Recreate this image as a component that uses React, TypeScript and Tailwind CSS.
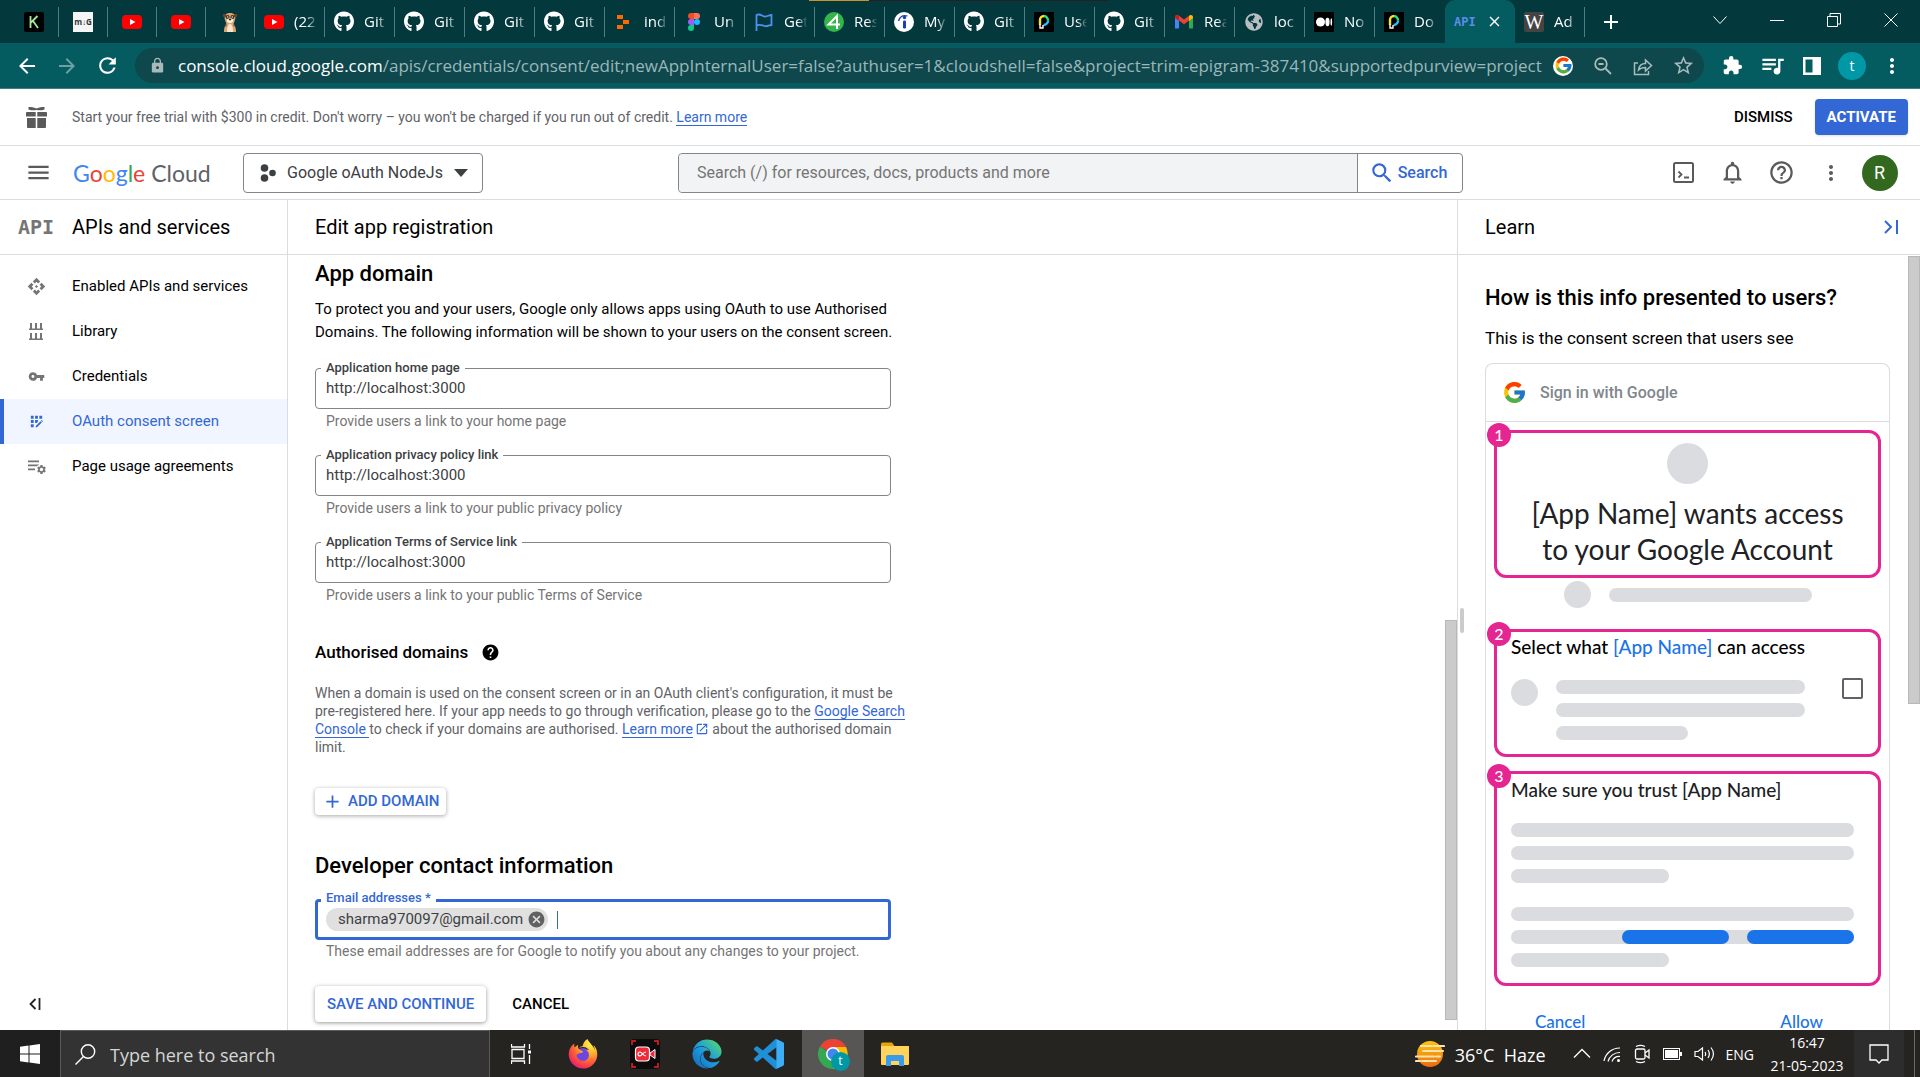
import React from "react";
import {
  MdAdd,
  MdApi,
  MdAppRegistration,
  MdArrowBack,
  MdArrowForward,
  MdCancel,
  MdClose,
  MdExtension,
  MdHelp,
  MdHelpOutline,
  MdLock,
  MdMenu,
  MdMoreVert,
  MdNotificationsNone,
  MdOpenInNew,
  MdQueueMusic,
  MdRefresh,
  MdSearch,
  MdSettings,
  MdStarBorder,
  MdVpnKey,
} from "react-icons/md";
import { FcGoogle } from "react-icons/fc";
import { FaEdge, FaFirefoxBrowser, FaGithub, FaGlobeAmericas } from "react-icons/fa";

/* ---------- favicons ---------- */

const YouTube = () => (
  <svg width="20" height="20" viewBox="0 0 20 20">
    <rect y="3" width="20" height="14" rx="4" fill="#ff0000" />
    <path d="M8 7l5.5 3L8 13z" fill="#fff" />
  </svg>
);

const KIcon = () => (
  <svg width="20" height="20" viewBox="0 0 20 20">
    <rect width="20" height="20" rx="2" fill="#000" />
    <path d="M6.5 4v12M13.5 4L7 10.5M9 9l5 7" stroke="#a6e89a" strokeWidth="1.8" fill="none" />
  </svg>
);

const MdIcon = () => (
  <span className="flex size-5 items-center justify-center bg-[#f5f5f5] text-[8px] font-bold text-[#333]">m↓G</span>
);

const Meerkat = () => (
  <svg width="20" height="20" viewBox="0 0 20 20">
    <path d="M4 20c0-5 1.500-7 2.500-8L5 8c-1.500-5 1-7 5-7s6.500 2 5 7l-1.500 4c1 1 2.500 3 2.500 8z" fill="#d9a775" />
    <path d="M7 20c0-5 1-8 3-8s3 3 3 8z" fill="#fbe6cb" />
    <path d="M6 12l-1 3 2-1zM14 12l1 3-2-1z" fill="#8a5a34" />
    <circle cx="4.500" cy="3.500" r="1.800" fill="#6b4526" />
    <circle cx="15.500" cy="3.500" r="1.800" fill="#6b4526" />
    <circle cx="7.600" cy="5" r="2" fill="#4a2f1c" />
    <circle cx="12.400" cy="5" r="2" fill="#4a2f1c" />
    <circle cx="7.700" cy="4.900" r=".7" fill="#fff" />
    <circle cx="12.300" cy="4.900" r=".7" fill="#fff" />
    <ellipse cx="10" cy="8.600" rx="3" ry="2.300" fill="#fff4e4" />
    <ellipse cx="10" cy="7.400" rx="1.300" ry=".9" fill="#222" />
  </svg>
);

const GitHub = () => <FaGithub size={21} color="#fff" />;

const Pixels = () => (
  <svg width="20" height="20" viewBox="0 0 20 20" fill="#ff6a00">
    <path d="M3 3h6v4H3zM9 8h6v4H9zM3 13h6v4H3z" />
  </svg>
);

const Figma = () => (
  <svg width="20" height="20" viewBox="0 0 20 20">
    <path d="M7 1h3v6H7a3 3 0 010-6z" fill="#f24e1e" />
    <path d="M10 1h3a3 3 0 010 6h-3z" fill="#ff7262" />
    <path d="M7 7h3v6H7a3 3 0 010-6z" fill="#a259ff" />
    <circle cx="13" cy="10" r="3" fill="#1abcfe" />
    <path d="M7 13h3v3a3 3 0 11-3-3z" fill="#0acf83" />
  </svg>
);

const Flag = () => (
  <svg width="20" height="20" viewBox="0 0 20 20" fill="none" stroke="#4f8ff0" strokeWidth="1.8">
    <path d="M2.500 19V3c4-2 6 2 9 1.500 2-.2 4-1.500 6-1.500v10c-3 0-4 2-7 1s-5-2-8-.5" />
  </svg>
);

const Four = () => (
  <svg width="20" height="20" viewBox="0 0 20 20">
    <circle cx="10" cy="10" r="10" fill="#35b44a" />
    <path d="M13 17V4L4.500 12.500H16" stroke="#fff" strokeWidth="2" fill="none" />
  </svg>
);

const Indeed = () => (
  <svg width="20" height="20" viewBox="0 0 20 20">
    <circle cx="10" cy="10" r="10" fill="#fff" />
    <circle cx="10.500" cy="5.500" r="1.700" fill="#1b3fb0" />
    <rect x="9" y="8.500" width="3" height="8" rx="1.200" fill="#1b3fb0" />
    <path d="M4.500 9c1-4 4-6.500 9-5" stroke="#1b3fb0" strokeWidth="1.300" fill="none" />
  </svg>
);

const PIcon = () => (
  <svg width="20" height="20" viewBox="0 0 20 20" fill="none" strokeWidth="2.400">
    <rect width="20" height="20" fill="#000" />
    <path d="M6 13V8a4 4 0 014-4" stroke="#f5e625" />
    <path d="M10 4a4.500 4.500 0 014 4.500" stroke="#35e07a" />
    <path d="M14 8.500A4.500 4.500 0 019.500 13" stroke="#22c3ff" />
    <path d="M6 12.500V16h3v-3" stroke="#fff" strokeWidth="1.400" />
  </svg>
);

const Gmail = () => (
  <svg width="20" height="20" viewBox="0 0 20 20">
    <path d="M1 5v11.500h4V8z" fill="#4285f4" />
    <path d="M19 5v11.500h-4V8z" fill="#34a853" />
    <path d="M1 5.500C1 3 3.500 2.500 5 3.700l5 3.800 5-3.800v4.800l-5 3.800-5-3.800L1 6z" fill="#ea4335" />
    <path d="M15 3.700c1.500-1.200 4-.7 4 1.800v.5l-4 3z" fill="#fbbc04" />
    <path d="M1 5.500C1 3 3.500 2.500 5 3.700v5L1 6z" fill="#c5221f" />
  </svg>
);

const Globe = () => <FaGlobeAmericas size={18} color="#b9bdc0" />;

const Medium = () => (
  <svg width="20" height="20" viewBox="0 0 20 20" fill="#fff">
    <rect width="20" height="20" rx="1" fill="#000" />
    <circle cx="6.500" cy="10" r="4.500" />
    <ellipse cx="13.500" cy="10" rx="2.100" ry="4.200" />
    <ellipse cx="17.300" cy="10" rx=".8" ry="3.800" />
  </svg>
);

const WIcon = () => (
  <span className="flex size-5 items-center justify-center rounded-xs bg-[#444] font-['Liberation_Serif',serif] text-xl leading-5 text-white">
    W
  </span>
);

/* ---------- browser chrome ---------- */

const pinned = [KIcon, MdIcon, YouTube, YouTube, Meerkat];

const openTabs: { icon: React.ComponentType; title: string }[] = [
  { icon: YouTube, title: "(22" },
  { icon: GitHub, title: "Git" },
  { icon: GitHub, title: "Git" },
  { icon: GitHub, title: "Git" },
  { icon: GitHub, title: "Git" },
  { icon: Pixels, title: "ind" },
  { icon: Figma, title: "Un" },
  { icon: Flag, title: "Get" },
  { icon: Four, title: "Res" },
  { icon: Indeed, title: "My" },
  { icon: GitHub, title: "Git" },
  { icon: PIcon, title: "Use" },
  { icon: GitHub, title: "Git" },
  { icon: Gmail, title: "Rea" },
  { icon: Globe, title: "loc" },
  { icon: Medium, title: "No" },
  { icon: PIcon, title: "Do" },
];

function Tab({ icon: Icon, title, last }: { icon: React.ComponentType; title: string; last?: boolean }) {
  return (
    <button className="flex h-full w-[70px] shrink-0 items-center">
      <span className="ml-[9px] flex w-5 shrink-0 justify-center">
        <Icon />
      </span>
      <span className="ml-[10px] w-[26px] whitespace-nowrap text-left text-[15px] text-white [mask-image:linear-gradient(to_right,black_50%,transparent_90%)]">
        {title}
      </span>
      <span className={last ? "hidden" : "ml-auto h-[30px] w-px bg-[#4f7d80]"} />
    </button>
  );
}

function TabStrip() {
  return (
    <div className="relative flex h-[43px] shrink-0 items-center bg-[#03383d] pl-[10px] font-['Open_Sans',sans-serif]">
      <div className="absolute left-[809px] top-0 flex h-px w-[301px] bg-[#222]">
        <span className="w-[60px] bg-[#c8922d]" />
      </div>
      {pinned.map((Icon, i) => (
        <button key={i} aria-label="Pinned tab" className="flex h-full w-[49px] shrink-0 items-center">
          <span className="flex flex-1 justify-center">
            <Icon />
          </span>
          <span className="h-[30px] w-px bg-[#4f7d80]" />
        </button>
      ))}
      {openTabs.map((t, i) => (
        <Tab key={i} icon={t.icon} title={t.title} last={i === openTabs.length - 1} />
      ))}
      <div className="flex h-full w-[70px] shrink-0 items-center justify-between rounded-t-[10px] bg-[#045b60] pl-[9px] pr-3">
        <span className="font-['DejaVu_Sans_Mono',monospace] text-xs font-bold text-[#5c8ce8]">API</span>
        <button aria-label="Close tab">
          <MdClose size={17} color="#fff" />
        </button>
      </div>
      <Tab icon={WIcon} title="Ad" />
      <button aria-label="New tab" className="ml-[14px]">
        <MdAdd size={24} color="#fff" />
      </button>
      <div className="ml-auto flex h-full items-center pb-1 pr-px">
        <button aria-label="Search tabs" className="flex w-[57px] justify-center">
          <svg width="14" height="14" viewBox="0 0 14 14" fill="none" stroke="#fff">
            <path d="M.5 3.500L7 10.500l6.500-7" />
          </svg>
        </button>
        <button aria-label="Minimise" className="flex w-[57px] justify-center">
          <svg width="14" height="14" viewBox="0 0 14 14" fill="none" stroke="#fff">
            <path d="M0 7.500h14" />
          </svg>
        </button>
        <button aria-label="Restore" className="flex w-[57px] justify-center">
          <svg width="14" height="14" viewBox="0 0 14 14" fill="none" stroke="#fff">
            <path d="M.5 3.500h10v10H.5zM3 3V.5h10.500V11H11" />
          </svg>
        </button>
        <button aria-label="Close window" className="flex w-[57px] justify-center">
          <svg width="14" height="14" viewBox="0 0 14 14" fill="none" stroke="#fff">
            <path d="M.5.5l13 13M13.500.5l-13 13" />
          </svg>
        </button>
      </div>
    </div>
  );
}

function AddressBar() {
  return (
    <div className="flex h-[46px] shrink-0 items-center border-b border-[#3d8084] bg-[#045b60] font-['Open_Sans',sans-serif] text-white">
      <div className="flex w-[135px] shrink-0 items-center pl-[7px]">
        <button aria-label="Back" className="flex w-10 justify-center">
          <MdArrowBack size={24} />
        </button>
        <button aria-label="Forward" className="flex w-10 justify-center text-[#6da0a3]">
          <MdArrowForward size={24} />
        </button>
        <button aria-label="Reload" className="flex w-10 justify-center">
          <MdRefresh size={25} />
        </button>
      </div>
      <div className="flex h-[35px] min-w-0 flex-1 items-center rounded-full bg-[#0e484d] pl-[14px]">
        <MdLock size={17} color="#a9b9ba" className="shrink-0" />
        <div className="ml-3 min-w-0 flex-1 overflow-hidden whitespace-nowrap text-[17px] text-[#9bb7b9]">
          <span className="text-white">console.cloud.google.com</span>
          /apis/credentials/consent/edit;newAppInternalUser=false?authuser=1&amp;cloudshell=false&amp;project=trim-epigram-387410&amp;supportedpurview=project
        </div>
        <div className="flex shrink-0 items-center pr-px text-[#a9bbbc]">
          <button aria-label="Search with Google" className="flex w-10 justify-center">
            <span className="flex size-5 items-center justify-center rounded-full bg-white">
              <FcGoogle size={19} />
            </span>
          </button>
          <button aria-label="Zoom" className="flex w-10 justify-center">
            <svg width="18" height="18" viewBox="0 0 18 18" fill="none" stroke="currentColor" strokeWidth="1.800">
              <circle cx="7" cy="7" r="5.800" />
              <path d="M4.500 7h5M11.500 11.500l5.500 5.500" />
            </svg>
          </button>
          <button aria-label="Share" className="flex w-10 justify-center">
            <svg width="20" height="20" viewBox="0 0 20 20" fill="none" stroke="currentColor" strokeWidth="1.500">
              <path d="M5 7H1.500v11.500h14V15M5.500 14c.5-4 3-6.500 7-6.500V4l6 5.500-6 5.500v-3.500c-3 0-5 .5-7 2.500z" />
            </svg>
          </button>
          <button aria-label="Bookmark" className="flex w-10 justify-center">
            <MdStarBorder size={23} />
          </button>
        </div>
      </div>
      <div className="flex shrink-0 items-center px-2">
        <button aria-label="Extensions" className="flex w-10 justify-center">
          <MdExtension size={21} />
        </button>
        <button aria-label="Media" className="flex w-10 justify-center">
          <MdQueueMusic size={27} />
        </button>
        <button aria-label="Side panel" className="flex w-10 justify-center">
          <svg width="18" height="18" viewBox="0 0 18 18">
            <path d="M0 0h18v18H0zM2.500 2.500v13h7v-13z" fill="#fff" fillRule="evenodd" />
          </svg>
        </button>
        <button aria-label="Profile" className="flex w-10 justify-center">
          <span className="flex size-7 items-center justify-center rounded-full bg-[#0097a7] text-sm">t</span>
        </button>
        <button aria-label="Menu" className="flex w-10 justify-center">
          <MdMoreVert size={24} />
        </button>
      </div>
    </div>
  );
}

/* ---------- console header ---------- */

function TrialBanner() {
  return (
    <div className="flex h-[57px] shrink-0 items-center border-b border-[#dadce0] pr-3">
      <span className="flex w-[72px] justify-center">
        <svg width="21" height="21" viewBox="0 0 21 21" fill="#5a5a5a">
          <path d="M1 5h8.700v4.500H0V6a1 1 0 011-1zM11.300 5H20a1 1 0 011 1v3.500h-9.700zM1 11h8.700v10H2a1 1 0 01-1-1zM11.300 11H20v9a1 1 0 01-1 1h-7.700z" />
          <path d="M2.500 0c3 0 5 0 8 1.600C13.500 0 15.500 0 18.500 0v2.500c-3 1-5 1-8 .5-3 .5-5 .5-8-.5z" />
        </svg>
      </span>
      <p className="text-sm text-[#5f6368]">
        Start your free trial with $300 in credit. Don't worry – you won't be charged if you run out of credit.{" "}
        <a href="#" className="border-b border-[#3367d6] text-[#3367d6]">
          Learn more
        </a>
      </p>
      <div className="ml-auto flex items-center gap-[10px] text-[15px] font-medium">
        <button className="px-3">DISMISS</button>
        <button className="h-9 rounded bg-[#3367d6] px-3 font-bold text-white shadow">ACTIVATE</button>
      </div>
    </div>
  );
}

function ConsoleHeader() {
  return (
    <header className="flex h-[54px] shrink-0 items-center border-b border-[#dadce0]">
      <div className="flex w-[678px] shrink-0 items-center pl-[25px]">
        <button aria-label="Navigation menu">
          <MdMenu size={27} color="#5a5a5a" />
        </button>
        <a href="#" className="ml-[21px] w-[149px] whitespace-nowrap font-['Lato',sans-serif] text-[23px] leading-7 text-[#5f6368]">
          <span className="text-[#4285f4]">G</span>
          <span className="text-[#ea4335]">o</span>
          <span className="text-[#fbbc04]">o</span>
          <span className="text-[#4285f4]">g</span>
          <span className="text-[#34a853]">l</span>
          <span className="text-[#ea4335]">e</span> Cloud
        </a>
        <button className="ml-[21px] flex h-10 w-[240px] items-center rounded border border-[#80868b] pl-4 text-base text-[#3c4043]">
          <svg width="16" height="18" viewBox="0 0 16 18" fill="#3c4043">
            <circle cx="4.500" cy="4" r="3.800" />
            <circle cx="4.500" cy="14" r="3.800" />
            <circle cx="12.500" cy="9" r="3.300" />
          </svg>
          <span className="ml-[11px] whitespace-nowrap">Google oAuth NodeJs</span>
          <svg width="14" height="8" viewBox="0 0 14 8" fill="#3c4043" className="ml-[11px]">
            <path d="M0 0h14L7 8z" />
          </svg>
        </button>
      </div>
      <form className="flex h-10 max-w-[785px] flex-1 rounded border border-[#80868b]">
        <input
          aria-label="Search"
          placeholder="Search (/) for resources, docs, products and more"
          className="min-w-0 flex-1 rounded-l bg-[#f1f3f4] px-[18px] text-base outline-none placeholder:text-[#757575]"
        />
        <button
          type="button"
          className="flex w-[105px] items-center justify-center gap-[3px] border-l border-[#80868b] pr-1 text-base font-medium text-[#3367d6]"
        >
          <MdSearch size={26} />
          Search
        </button>
      </form>
      <div className="ml-auto flex items-center pr-4 text-[#5a5a5a]">
        <button aria-label="Cloud Shell" className="flex w-[49px] justify-center">
          <svg width="21" height="21" viewBox="0 0 21 21" fill="none" stroke="currentColor" strokeWidth="2">
            <rect x="1" y="1" width="19" height="19" rx="1.500" />
            <path d="M5.500 9.500l3 3-3 3M11 15.500h5" strokeWidth="1.800" />
          </svg>
        </button>
        <button aria-label="Notifications" className="flex w-[49px] justify-center">
          <MdNotificationsNone size={27} />
        </button>
        <button aria-label="Help" className="flex w-[49px] justify-center">
          <MdHelpOutline size={27} />
        </button>
        <button aria-label="More options" className="flex w-[49px] justify-center">
          <MdMoreVert size={24} />
        </button>
        <button aria-label="Account" className="flex w-[49px] justify-center">
          <span className="flex size-9 items-center justify-center rounded-full bg-[#33691e] text-lg text-white">R</span>
        </button>
      </div>
    </header>
  );
}

/* ---------- sidebar ---------- */

const LibraryIcon = () => (
  <svg width="14" height="17" viewBox="0 0 14 17" fill="currentColor">
    <path d="M0 5.500h14V7H0zM1 0h2v6H1zM6 0h2v6H6zM11 0h2v6h-2zM0 15.500h14V17H0zM1 10h2v6H1zM6 10h2v6H6zM11 10h2v6h-2z" />
  </svg>
);

const UsageIcon = () => (
  <span className="relative block h-4 w-[17px]">
    <svg width="11" height="13" viewBox="0 0 11 13" fill="currentColor">
      <path d="M0 1.500h11v1.700H0zM0 5.500h11v1.700H0zM0 9.500h7v1.700H0z" />
    </svg>
    <span className="absolute -right-0.5 bottom-0 rounded-full bg-white">
      <MdSettings size={11} />
    </span>
  </span>
);

const navItems = [
  { label: "Enabled APIs and services", icon: <MdApi size={19} /> },
  { label: "Library", icon: <LibraryIcon /> },
  { label: "Credentials", icon: <MdVpnKey size={17} /> },
  { label: "OAuth consent screen", icon: <MdAppRegistration size={17} />, active: true },
  { label: "Page usage agreements", icon: <UsageIcon /> },
];

function Sidebar() {
  return (
    <aside className="flex w-[288px] shrink-0 flex-col border-r border-[#dadce0]">
      <div className="flex h-[55px] shrink-0 items-center border-b border-[#dadce0]">
        <span className="w-[72px] text-center font-['DejaVu_Sans_Mono',monospace] text-xl font-bold text-[#757575]">API</span>
        <h2 className="text-xl">APIs and services</h2>
      </div>
      <nav className="pt-[9px]">
        {navItems.map((n) => (
          <a
            key={n.label}
            href="#"
            className={
              n.active
                ? "flex h-[45px] items-center border-l-4 border-[#3367d6] bg-[#f0f5ff] text-[15px] text-[#3367d6]"
                : "flex h-[45px] items-center border-l-4 border-transparent text-[15px]"
            }
          >
            <span className={n.active ? "flex w-[68px] justify-center pr-1" : "flex w-[68px] justify-center pr-1 text-[#757575]"}>
              {n.icon}
            </span>
            {n.label}
          </a>
        ))}
      </nav>
      <button aria-label="Collapse menu" className="mb-5 ml-7 mt-auto w-fit">
        <svg width="14" height="12" viewBox="0 0 14 12" fill="none" stroke="#222" strokeWidth="1.800">
          <path d="M7.500 1L2.500 6l5 5M11.500 0v12" />
        </svg>
      </button>
    </aside>
  );
}

/* ---------- form ---------- */

const fields = [
  { id: "home", label: "Application home page", hint: "Provide users a link to your home page" },
  { id: "privacy", label: "Application privacy policy link", hint: "Provide users a link to your public privacy policy" },
  { id: "terms", label: "Application Terms of Service link", hint: "Provide users a link to your public Terms of Service" },
];

function FormPanel() {
  return (
    <main className="relative flex min-w-0 flex-1 flex-col">
      <div className="flex h-[55px] shrink-0 items-center border-b border-[#dadce0] pl-[27px]">
        <h1 className="text-xl">Edit app registration</h1>
      </div>
      <div className="min-h-0 flex-1 overflow-hidden pl-[27px] pt-[5px]">
        <h2 className="text-[22px] font-medium leading-7">App domain</h2>
        <p className="mt-[10px] max-w-[600px] text-[15px] leading-[23px]">
          To protect you and your users, Google only allows apps using OAuth to use Authorised Domains. The following
          information will be shown to your users on the consent screen.
        </p>
        <div className="mt-6 flex max-w-[576px] flex-col gap-[25px]">
          {fields.map((f) => (
            <div key={f.id} className="relative">
              <label
                htmlFor={f.id}
                className="absolute -top-2 left-[6px] bg-white px-[5px] text-[13px] font-medium leading-4 text-[#3c4043]"
              >
                {f.label}
              </label>
              <input
                id={f.id}
                defaultValue="http://localhost:3000"
                className="block h-[41px] w-full rounded border border-[#80868b] px-[10px] pb-0.5 text-[15px] text-[#3c4043] outline-none"
              />
              <p className="mt-1 pl-[11px] text-sm leading-[17px] text-[#757575]">{f.hint}</p>
            </div>
          ))}
        </div>
        <div className="mt-9 flex items-center gap-[13px]">
          <h3 className="text-[17px] font-medium leading-6">Authorised domains</h3>
          <button aria-label="About authorised domains">
            <MdHelp size={19} />
          </button>
        </div>
        <p className="mt-5 max-w-[594px] text-sm leading-[18px] text-[#5f6368]">
          When a domain is used on the consent screen or in an OAuth client's configuration, it must be pre-registered
          here. If your app needs to go through verification, please go to the{" "}
          <a href="#" className="border-b border-[#3367d6] text-[#3367d6]">
            Google Search Console{" "}
          </a>
          to check if your domains are authorised.{" "}
          <a href="#" className="text-[#3367d6]">
            <span className="border-b border-[#3367d6]">Learn more</span>
            <MdOpenInNew size={14} className="ml-0.5 inline align-[-2px]" />
          </a>{" "}
          about the authorised domain limit.
        </p>
        <button className="mt-8 flex h-[27px] items-center gap-[5px] rounded px-[7px] text-[15px] font-medium text-[#3367d6] shadow-[0_1px_4px_rgba(0,0,0,0.35)]">
          <MdAdd size={21} />
          ADD DOMAIN
        </button>
        <h2 className="mt-[37px] text-[22px] font-medium leading-7">Developer contact information</h2>
        <div className="relative mt-[19px] max-w-[576px]">
          <label
            htmlFor="emails"
            className="absolute -top-2 left-[6px] bg-white px-[5px] text-[13px] font-medium leading-[14px] text-[#3367d6]"
          >
            Email addresses *
          </label>
          <div className="flex h-[41px] items-center rounded border-3 border-[#3367d6] pl-2">
            <span className="flex h-[23px] items-center gap-1 rounded-full bg-[#e0e0e0] pl-3 pr-0.5 text-[15px] text-[#3c4043]">
              sharma970097@gmail.com
              <button aria-label="Remove sharma970097@gmail.com">
                <MdCancel size={19} color="#616161" />
              </button>
            </span>
            <span className="ml-[9px] h-[18px] w-px bg-[#3367d6]" />
            <input id="emails" className="min-w-0 flex-1 outline-none" />
          </div>
          <p className="mt-[3px] pl-[11px] text-sm leading-[17px] text-[#757575]">
            These email addresses are for Google to notify you about any changes to your project.
          </p>
        </div>
        <div className="mt-[26px] flex gap-[14px] text-[15px] font-medium">
          <button className="h-9 rounded px-3 text-[#3367d6] shadow-[0_1px_4px_rgba(0,0,0,0.4)]">
            SAVE AND CONTINUE
          </button>
          <button className="h-9 px-3">CANCEL</button>
        </div>
      </div>
      <div className="absolute bottom-[10px] right-0 h-[400px] w-3 border border-[#b8b8b8] bg-[#cbcbcb]" />
    </main>
  );
}

/* ---------- learn panel ---------- */

const Bar = ({ className = "" }: { className?: string }) => (
  <span className={`block h-[14px] rounded-full bg-[#dadce0] ${className}`} />
);

function Callout({ n, className, children }: { n: number; className: string; children: React.ReactNode }) {
  return (
    <section className={`relative rounded-xl border-3 border-[#e52592] ${className}`}>
      <span className="absolute -left-[10px] -top-[10px] flex size-6 items-center justify-center rounded-full bg-[#e52592] text-base font-medium text-white">
        {n}
      </span>
      {children}
    </section>
  );
}

function LearnPanel() {
  return (
    <aside className="relative flex w-[463px] shrink-0 flex-col border-l border-[#dadce0]">
      <div className="flex h-[55px] shrink-0 items-center justify-between border-b border-[#dadce0] pl-[27px] pr-[22px]">
        <h2 className="text-xl">Learn</h2>
        <button aria-label="Hide panel">
          <svg width="14" height="14" viewBox="0 0 14 14" fill="none" stroke="#3367d6" strokeWidth="2">
            <path d="M1 1l6 6-6 6M13 0v14" />
          </svg>
        </button>
      </div>
      <div className="min-h-0 flex-1 overflow-hidden pl-[27px] pr-[30px] pt-[29px]">
        <h3 className="text-[22px] font-medium leading-7">How is this info presented to users?</h3>
        <p className="mt-[14px] text-[17px] leading-6">This is the consent screen that users see</p>
        <div className="mt-[13px] rounded-t-lg border border-b-0 border-[#dadce0] font-['Lato',sans-serif]">
          <div className="flex h-[58px] items-center gap-[13px] border-b border-[#dadce0] pl-4 font-['Roboto',sans-serif] text-base font-medium text-[#80868b]">
            <FcGoogle size={25} />
            Sign in with Google
          </div>
          <div className="px-2 pt-2">
            <Callout n={1} className="flex h-[148px] flex-col items-center pt-[10px]">
              <span className="size-[41px] rounded-full bg-[#dadce0]" />
              <p className="mt-[11px] whitespace-nowrap text-center text-[28px] leading-9 text-[#202124]">
                [App Name] wants access
                <br />
                to your Google Account
              </p>
            </Callout>
            <div className="mt-[3px] flex items-center gap-[18px] pl-[70px]">
              <span className="size-[27px] rounded-full bg-[#dadce0]" />
              <Bar className="w-[203px]" />
            </div>
            <Callout n={2} className="mt-[21px] h-[128px] pl-[14px] pr-[15px] pt-[3px]">
              <p className="text-[19px] font-medium leading-6">
                Select what <span className="text-[#1a73e8]">[App Name]</span> can access
              </p>
              <div className="mt-[19px] flex items-start">
                <span className="mt-px size-[27px] rounded-full bg-[#dadce0]" />
                <div className="ml-[18px] mt-0.5 flex w-[249px] flex-col gap-[9px]">
                  <Bar />
                  <Bar />
                  <Bar className="w-[132px]" />
                </div>
                <input
                  type="checkbox"
                  aria-label="Select access"
                  className="ml-auto size-[21px] appearance-none rounded-xs border-2 border-[#5f6368]"
                />
              </div>
            </Callout>
            <Callout n={3} className="mt-[14px] h-[215px] pl-[14px] pr-6 pt-1">
              <p className="text-[19px] font-medium leading-6 text-[#202124]">Make sure you trust [App Name]</p>
              <div className="mt-[21px] flex flex-col gap-[9px]">
                <Bar />
                <Bar />
                <Bar className="w-[158px]" />
              </div>
              <div className="mt-6 flex flex-col gap-[9px]">
                <Bar />
                <div className="flex h-[14px] justify-end gap-[18px] rounded-full bg-[#dadce0]">
                  <span className="w-[107px] rounded-full bg-[#1a73e8]" />
                  <span className="w-[107px] rounded-full bg-[#1a73e8]" />
                </div>
                <Bar className="w-[158px]" />
              </div>
            </Callout>
            <div className="mt-6 flex justify-between pl-[41px] pr-[58px] text-[17px] font-medium leading-6 text-[#1a73e8]">
              <button>Cancel</button>
              <button>Allow</button>
            </div>
          </div>
        </div>
      </div>
      <div className="absolute left-[2px] top-[408px] h-[25px] w-1 rounded-full bg-[#cbcbcb]" />
      <div className="absolute right-0 top-14 h-[448px] w-3 border border-[#b8b8b8] bg-[#cbcbcb]" />
    </aside>
  );
}

/* ---------- taskbar ---------- */

const TaskView = () => (
  <svg width="20" height="20" viewBox="0 0 20 20" fill="none" stroke="#fff" strokeWidth="1.300">
    <path d="M1 5.500h12v9H1zM.5 0v3h13V0M.5 20v-3h13v3M18.500 0v5M18.500 11v9" />
    <path d="M17 6.500h3v3h-3z" fill="#fff" stroke="none" />
  </svg>
);

const Firefox = () => (
  <svg width="30" height="30" viewBox="0 0 30 30">
    <defs>
      <radialGradient id="ffBody" cx=".75" cy=".15" r="1">
        <stop offset="0" stopColor="#fff44f" />
        <stop offset=".35" stopColor="#ffb02e" />
        <stop offset=".65" stopColor="#ff5b36" />
        <stop offset="1" stopColor="#e0107a" />
      </radialGradient>
    </defs>
    <circle cx="15" cy="16.500" r="7.500" fill="#6f45e0" />
    <FaFirefoxBrowser size={30} fill="url(#ffBody)" />
  </svg>
);

const Recorder = () => (
  <svg width="30" height="30" viewBox="0 0 30 30" fill="none">
    <rect width="30" height="30" rx="4" fill="#0c0c0c" />
    <path d="M2 6V2h4M24 2h4v4M28 24v4h-4M6 28H2v-4" stroke="#f0202c" strokeWidth="1.500" />
    <rect x="5.500" y="8" width="14" height="14" rx="3.500" fill="#ee2b3b" stroke="#fff" strokeWidth="1.200" />
    <path d="M20 14l5-3.500v9L20 16z" fill="#ee2b3b" stroke="#fff" />
    <path d="M16 13c-3.500 0-4 4-6 4a2 2 0 010-4c2.500 0 2.500 4 6 4" stroke="#fff" strokeWidth="1.100" />
  </svg>
);

const Edge = () => (
  <svg width="30" height="30" viewBox="0 0 30 30">
    <defs>
      <linearGradient id="edgeBody" x1="0" y1="1" x2="1" y2="0">
        <stop offset="0" stopColor="#1464b8" />
        <stop offset=".5" stopColor="#1d9ee0" />
        <stop offset="1" stopColor="#5fe05a" />
      </linearGradient>
    </defs>
    <FaEdge size={30} fill="url(#edgeBody)" />
  </svg>
);

const VsCode = () => (
  <svg width="30" height="30" viewBox="0 0 24 24">
    <path
      fill="#1f8fd8"
      d="M23.150 2.587L18.210.210a1.494 1.494 0 0 0-1.705.290l-9.460 8.630-4.120-3.128a.999.999 0 0 0-1.276.057L.327 7.261A1 1 0 0 0 .326 8.740L3.899 12 .326 15.260a1 1 0 0 0 .001 1.479L1.650 17.940a.999.999 0 0 0 1.276.057l4.120-3.128 9.460 8.630a1.492 1.492 0 0 0 1.704.290l4.942-2.377A1.500 1.500 0 0 0 24 20.060V3.939a1.500 1.500 0 0 0-.850-1.352zm-5.146 14.861L10.826 12l7.178-5.448v10.896z"
    />
    <path fill="#3dadf5" d="M18 .2l5.150 2.387A1.500 1.500 0 0 1 24 3.939V20.060a1.500 1.500 0 0 1-.848 1.352L18 23.800z" />
  </svg>
);

const Chrome = () => (
  <span className="relative block">
    <svg width="30" height="30" viewBox="0 0 30 30">
      <path d="M15 15L2 7.500A15 15 0 0128 7.500z" fill="#ea4335" />
      <path d="M15 15h-2L2 7.500A15 15 0 0015 30l6.500-11z" fill="#34a853" />
      <path d="M15 8h13a15 15 0 01-13 22l6.500-11z" fill="#fbbc04" />
      <circle cx="15" cy="15" r="7" fill="#fff" />
      <circle cx="15" cy="15" r="5.500" fill="#4285f4" />
    </svg>
    <span className="absolute -bottom-[2px] -right-[2px] flex size-[19px] items-center justify-center rounded-full bg-[#0097a7] text-xs leading-none text-white">
      t
    </span>
  </span>
);

const Explorer = () => (
  <svg width="28" height="24" viewBox="0 0 28 24">
    <path d="M0 2a1.500 1.500 0 011.500-1.500H11L13.500 4H28v5H0z" fill="#e5a50a" />
    <path d="M0 4h27a1 1 0 011 1v17a1 1 0 01-1 1H1a1 1 0 01-1-1z" fill="#ffd35c" />
    <path d="M5 24v-9a2 2 0 012-2h14a2 2 0 012 2v9h-5v-5h-8v5z" fill="#3a9be8" />
  </svg>
);

const Haze = () => (
  <svg width="30" height="28" viewBox="0 0 30 28">
    <defs>
      <linearGradient id="sun" x1="0" y1="0" x2="0" y2="1">
        <stop offset="0" stopColor="#ffc60a" />
        <stop offset="1" stopColor="#ec6a10" />
      </linearGradient>
    </defs>
    <circle cx="15" cy="14" r="13" fill="url(#sun)" />
    <path
      d="M6 6h11M19 6h10M8 11h20M1 16.500h18M21 16.500h4M1 21h4M7 21h14"
      stroke="#fbe3b0"
      strokeWidth="2.200"
      strokeLinecap="round"
    />
  </svg>
);

const apps = [
  { name: "Task view", icon: TaskView },
  { name: "Firefox", icon: Firefox },
  { name: "Screen recorder", icon: Recorder },
  { name: "Edge", icon: Edge },
  { name: "Visual Studio Code", icon: VsCode },
];

function Taskbar() {
  return (
    <footer className="flex h-[47px] shrink-0 items-center bg-[#262421] font-['Open_Sans',sans-serif] text-white">
      <button aria-label="Start" className="flex h-full w-[60px] shrink-0 items-center justify-center bg-[#1f1f1f]">
        <svg width="20" height="20" viewBox="0 0 20 20" fill="#fff">
          <path d="M0 2.800L8.500 1.600v7.900H0zM9.500 1.400L20 0v9.500H9.500zM0 10.500h8.500v7.900L0 17.200zM9.500 10.500H20V20L9.500 18.600z" />
        </svg>
      </button>
      <label className="flex h-full w-[430px] shrink-0 items-center border border-b-0 border-[#5a5a5a] bg-[#333] pl-[14px]">
        <svg width="21" height="21" viewBox="0 0 21 21" fill="none" stroke="#fff" strokeWidth="1.400">
          <circle cx="13" cy="7.500" r="6.700" />
          <path d="M8.500 12.500L.5 20.500" />
        </svg>
        <input
          aria-label="Type here to search"
          placeholder="Type here to search"
          className="ml-[14px] mt-0.5 min-w-0 flex-1 text-lg outline-none placeholder:text-[#d6d6d6]"
        />
      </label>
      {apps.map(({ name, icon: Icon }) => (
        <button key={name} aria-label={name} className="flex h-full w-[62px] shrink-0 items-center justify-center">
          <Icon />
        </button>
      ))}
      <button aria-label="Chrome" className="ml-0.5 flex h-full w-[62px] shrink-0 items-center justify-center bg-[#575654]">
        <Chrome />
      </button>
      <button aria-label="File Explorer" className="flex h-full w-[62px] shrink-0 items-center justify-center">
        <Explorer />
      </button>
      <div className="ml-auto flex h-full shrink-0 items-center">
        <Haze />
        <span className="ml-[10px] mt-0.5 text-lg">36°C&nbsp; Haze</span>
        <span className="ml-[27px] flex items-center gap-[12px]">
          <svg width="18" height="20" viewBox="0 0 18 20" fill="none" stroke="#fff" strokeWidth="1.300">
            <path d="M1 13.500l8-8 8 8" />
          </svg>
          <svg width="18" height="18" viewBox="0 0 18 18" fill="none" stroke="#fff" strokeWidth="1.200">
            <path d="M1 16A16 16 0 0117 3M5 16.500A12 12 0 0117 7.500M9 16.500a8 8 0 018-5" />
            <circle cx="15.500" cy="15.500" r="1.500" fill="#fff" stroke="none" />
          </svg>
          <svg width="18" height="20" viewBox="0 0 18 20" fill="none" stroke="#fff" strokeWidth="1.300">
            <rect x="2.500" y="5" width="9.500" height="10" rx="1.500" />
            <path d="M12 9l4-3v8l-4-3M3 2.500c3-1.500 6-1.500 9 0M3 17.500c3 1.500 6 1.500 9 0" />
          </svg>
          <svg width="19" height="12" viewBox="0 0 19 12" fill="none" stroke="#fff">
            <rect x=".5" y=".5" width="16" height="11" />
            <rect x="2" y="2" width="13" height="8" fill="#fff" stroke="none" />
            <path d="M18 4v4" strokeWidth="2" />
          </svg>
          <svg width="21" height="18" viewBox="0 0 21 18" fill="none" stroke="#fff" strokeWidth="1.200">
            <path d="M1 6.500h3L8.500 3v12L4 11.500H1zM11 7c.8 1.200.8 2.800 0 4M14 5c1.700 2.500 1.700 5.500 0 8M17 2.500c3 4 3 9 0 13" />
          </svg>
        </span>
        <span className="ml-[11px] mt-0.5 text-sm">ENG</span>
        <span className="ml-[11px] flex w-[84px] flex-col items-center pt-px text-sm leading-[23px]">
          <span>16:47</span>
          <span>21-05-2023</span>
        </span>
        <button aria-label="Notifications" className="ml-[5px] flex h-full w-[50px] items-center justify-center bg-[#2d2d2d]">
          <svg width="20" height="20" viewBox="0 0 20 20" fill="none" stroke="#fff" strokeWidth="1.300">
            <path d="M1 1h18v15h-6l-3 3-3-3H1z" />
          </svg>
        </button>
        <span className="ml-[10px] mr-[5px] h-full w-px bg-[#6b6b6b]" />
      </div>
    </footer>
  );
}

export default function App() {
  return (
    <div className="flex h-screen flex-col overflow-hidden bg-white font-['Roboto',sans-serif] text-black">
      <TabStrip />
      <AddressBar />
      <TrialBanner />
      <ConsoleHeader />
      <div className="flex min-h-0 flex-1">
        <Sidebar />
        <FormPanel />
        <LearnPanel />
      </div>
      <Taskbar />
    </div>
  );
}
